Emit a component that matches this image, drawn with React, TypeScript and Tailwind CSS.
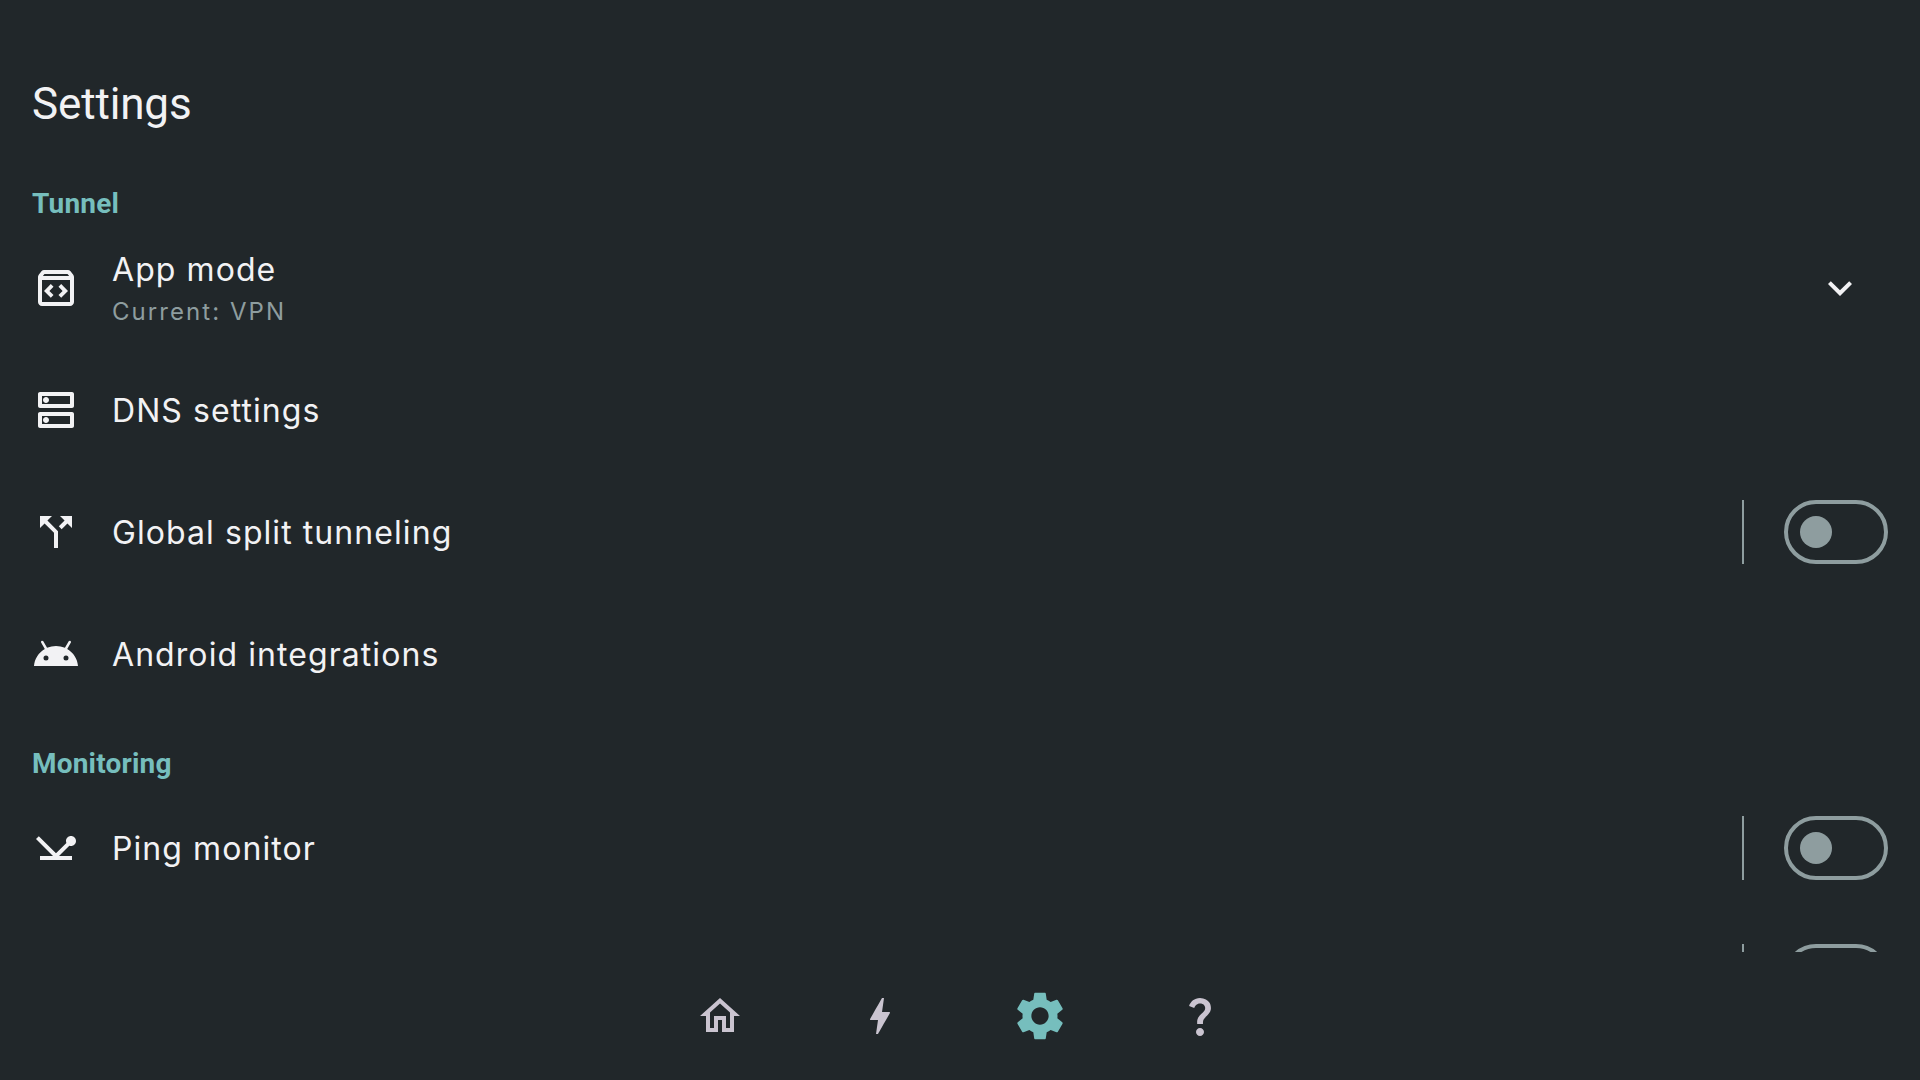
import type { ReactNode } from 'react';

const paths = {
  dns: 'M19 15v4H5v-4h14m1-2H4c-.55 0-1 .45-1 1v6c0 .55.45 1 1 1h16c.55 0 1-.45 1-1v-6c0-.55-.45-1-1-1zM7 18.5c-.82 0-1.5-.67-1.5-1.5s.68-1.5 1.5-1.5 1.5.67 1.5 1.5-.67 1.5-1.5 1.5zM19 5v4H5V5h14m1-2H4c-.55 0-1 .45-1 1v6c0 .55.45 1 1 1h16c.55 0 1-.45 1-1V4c0-.55-.45-1-1-1zM7 8.5c-.82 0-1.5-.67-1.5-1.5S6.18 5.5 7 5.5s1.5.68 1.5 1.5S7.83 8.5 7 8.5z',
  split: 'M14 4l2.29 2.29-2.88 2.88 1.42 1.42 2.88-2.88L20 10V4zm-4 0H4v6l2.29-2.29 4.71 4.7V20h2v-8.41l-5.29-5.3z',
  android: 'M17.6 9.48l1.84-3.18c.16-.31.04-.69-.26-.85-.29-.15-.65-.06-.83.22l-1.88 3.24a11.463 11.463 0 0 0-8.94 0L5.65 5.67c-.19-.29-.58-.38-.87-.2-.28.18-.37.54-.22.83L6.4 9.48C3.3 11.25 1.28 14.44 1 18h22c-.28-3.56-2.3-6.75-5.4-8.52zM7 15.25a1.25 1.25 0 1 1 0-2.5 1.25 1.25 0 0 1 0 2.5zm10 0a1.25 1.25 0 1 1 0-2.5 1.25 1.25 0 0 1 0 2.5z',
  ping: 'M12 14.67 3.41 6.09 2 7.5l8.5 8.5H4v2h16v-2h-6.5l5.15-5.15c.26.1.55.15.85.15 1.38 0 2.5-1.12 2.5-2.5S20.88 6 19.5 6 17 7.12 17 8.5c0 .35.07.67.2.97z',
  chevron: 'M16.59 8.59 12 13.17 7.41 8.59 6 10l6 6 6-6z',
  home: 'M12 5.69l5 4.5V18h-2v-6H9v6H7v-7.81l5-4.5M12 3L2 12h3v8h6v-6h2v6h6v-8h3L12 3z',
  bolt: 'M11 21h-1l1-7H7.5c-.58 0-.57-.32-.38-.66.19-.34.05-.08.07-.12C8.48 10.94 10.42 7.54 13 3h1l-1 7h3.5c.49 0 .56.33.47.51l-.07.15C12.96 17.55 11 21 11 21z',
  gear: 'M19.43 12.98c.04-.32.07-.64.07-.98s-.03-.66-.07-.98l2.11-1.65c.19-.15.24-.42.12-.64l-2-3.46c-.12-.22-.39-.3-.61-.22l-2.49 1c-.52-.4-1.08-.73-1.69-.98l-.38-2.65C14.46 2.18 14.25 2 14 2h-4c-.25 0-.46.18-.49.42l-.38 2.65c-.61.25-1.17.59-1.69.98l-2.49-1c-.23-.09-.49 0-.61.22l-2 3.46c-.13.22-.07.49.12.64l2.11 1.65c-.04.32-.07.65-.07.98s.03.66.07.98l-2.11 1.65c-.19.15-.24.42-.12.64l2 3.46c.12.22.39.3.61.22l2.49-1c.52.4 1.08.73 1.69.98l.38 2.65c.03.24.24.42.49.42h4c.25 0 .46-.18.49-.42l.38-2.65c.61-.25 1.17-.59 1.69-.98l2.49 1c.23.09.49 0 .61-.22l2-3.46c.12-.22.07-.49-.12-.64l-2.11-1.65zM12 15.7c-2.04 0-3.7-1.66-3.7-3.7s1.66-3.7 3.7-3.7 3.7 1.66 3.7 3.7-1.66 3.7-3.7 3.7z',
  question: 'M11.07 12.85c.77-1.39 2.25-2.21 3.11-3.44.91-1.29.4-3.7-2.18-3.7-1.69 0-2.52 1.28-2.87 2.34L6.54 6.96C7.25 4.83 9.18 3 11.99 3c2.35 0 3.96 1.07 4.78 2.41.7 1.15 1.11 3.3.03 4.9-1.2 1.77-2.35 2.31-2.97 3.45-.25.46-.35.76-.35 2.24h-2.89c-.01-.78-.13-2.05.48-3.15zM14 20c0 1.1-.9 2-2 2s-2-.9-2-2 .9-2 2-2 2 .9 2 2z',
  appMode:
    'M20.54 5.23l-1.39-1.68C18.88 3.21 18.47 3 18 3H6c-.47 0-.88.21-1.16.55L3.46 5.23C3.17 5.57 3 6.02 3 6.5V19c0 1.1.9 2 2 2h14c1.1 0 2-.9 2-2V6.5c0-.48-.17-.93-.46-1.27zM6.24 5h11.52l.83 1H5.42l.82-1zM5 19V8h14v11H5zM9.4 10.05 6 13.45l3.4 3.4 1.35-1.35-2.05-2.05 2.05-2.05zM14.6 10.05l-1.35 1.35 2.05 2.05-2.05 2.05 1.35 1.35 3.4-3.4z',
};

function Icon({ name, className = 'size-12' }: { name: keyof typeof paths; className?: string }) {
  return (
    <svg viewBox="0 0 24 24" fill="currentColor" fillRule="evenodd" className={`shrink-0 ${className}`}>
      <path d={paths[name]} />
    </svg>
  );
}

function Toggle() {
  return (
    <div className="flex items-center gap-10">
      <div className="h-16 w-0.5 bg-[#8e9d9f]" />
      <div className="flex h-16 w-26 items-center rounded-full border-4 border-[#8e9d9f] pl-3">
        <div className="size-8 rounded-full bg-[#8e9d9f]" />
      </div>
    </div>
  );
}

function Row({ icon, title, subtitle, className, children }: {
  icon: keyof typeof paths;
  title: string;
  subtitle?: string;
  className: string;
  children?: ReactNode;
}) {
  return (
    <div className={`flex shrink-0 items-center pl-8 pr-8 ${className}`}>
      <Icon name={icon} />
      <div className="ml-8 flex-1 pt-0.5 font-['Inter',sans-serif]">
        <div className="text-[32px] leading-10 tracking-[1.07px]">{title}</div>
        {subtitle && <div className="-mb-0.5 mt-1 text-[24px] leading-9 tracking-[2.05px] text-[#8e9d9f]">{subtitle}</div>}
      </div>
      {children}
    </div>
  );
}

function Section({ children, className }: { children: string; className: string }) {
  return (
    <h2 className={`shrink-0 pl-8 text-[28px] font-bold leading-10 tracking-[0.2px] text-[#76bebd] ${className}`}>
      {children}
    </h2>
  );
}

export default function App() {
  return (
    <div className="flex h-[1080px] w-[1920px] flex-col overflow-hidden bg-[#21272a] font-['Roboto',sans-serif] text-[#f2f2f4]">
      <main className="flex h-[952px] shrink-0 flex-col overflow-hidden">
        <h1 className="mt-[76px] shrink-0 pl-8 text-[44px] leading-[56px] tracking-[-0.15px]">Settings</h1>
        <Section className="mt-[52px]">Tunnel</Section>
        <Row icon="appMode" title="App mode" subtitle="Current: VPN" className="mt-[22px] h-[84px]">
          <Icon name="chevron" className="mr-6 size-12" />
        </Row>
        <Row icon="dns" title="DNS settings" className="mt-12 h-16" />
        <Row icon="split" title="Global split tunneling" className="mt-[58px] h-16">
          <Toggle />
        </Row>
        <Row icon="android" title="Android integrations" className="mt-[58px] h-16" />
        <Section className="mt-[58px]">Monitoring</Section>
        <Row icon="ping" title="Ping monitor" className="mt-[32px] h-16">
          <Toggle />
        </Row>
        <div className="mt-16 flex shrink-0 justify-end pr-8">
          <Toggle />
        </div>
      </main>
      <nav className="flex flex-1 items-center justify-center gap-28 text-[#cac4d0]">
        <Icon name="home" />
        <Icon name="bolt" />
        <div className="-mx-1 flex text-[#76bebd]">
          <Icon name="gear" className="size-14" />
        </div>
        <Icon name="question" />
      </nav>
    </div>
  );
}
